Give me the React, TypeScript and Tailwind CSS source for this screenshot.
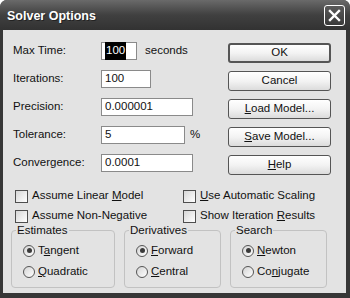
import React from "react";

const font = { fontFamily: '"Liberation Sans", Arial, sans-serif' };

function Field({ label, width, children, suffix }: { label: string; width: string; children: React.ReactNode; suffix?: string }) {
  return (
    <div className="flex items-center h-[18px]">
      <span className="w-[88px]">{label}</span>
      <div className={`${width} h-[18px] bg-white border border-[#8a8a8a] flex items-center pl-[3px]`}>
        {children}
      </div>
      {suffix && <span className={suffix === "%" ? "ml-[5px]" : "ml-[8px]"}>{suffix}</span>}
    </div>
  );
}

function Button({ children, isDefault }: { children: React.ReactNode; isDefault?: boolean }) {
  return (
    <div
      className={`h-[20px] w-[103px] rounded-[3px] flex items-center justify-center bg-gradient-to-b from-white via-[#f3f3f3] to-[#dcdcdc] ${
        isDefault ? "border-2 border-[#555]" : "border border-[#555]"
      }`}
    >
      {children}
    </div>
  );
}

function Checkbox({ children }: { children: React.ReactNode }) {
  return (
    <div className="flex items-center h-[20px] gap-[4px]">
      <span className="w-[13px] h-[13px] border border-[#4e4e4e] bg-gradient-to-br from-[#d6d6d6] to-white" />
      <span>{children}</span>
    </div>
  );
}

function Radio({ checked, children }: { checked?: boolean; children: React.ReactNode }) {
  return (
    <div className="flex items-center h-[21px] gap-[3px]">
      <span className="w-[12px] h-[12px] rounded-full border border-[#555] bg-gradient-to-br from-[#d4d4d4] to-white flex items-center justify-center">
        {checked && <span className="w-[5px] h-[5px] rounded-full bg-[#3a3a3a]" />}
      </span>
      <span>{children}</span>
    </div>
  );
}

function Group({ title, width, children }: { title: string; width: string; children: React.ReactNode }) {
  return (
    <fieldset className={`${width} border border-[#c2c2c2] rounded-[4px] pt-[3px] pb-[5px]`}>
      <legend className="ml-[4px] px-[1px] leading-[13px]">{title}</legend>
      <div className="pl-[11px]">{children}</div>
    </fieldset>
  );
}

export default function App() {
  return (
    <div className="w-[350px] h-[298px] bg-white">
      <div className="w-full h-full bg-[#373737] rounded-t-[7px] flex flex-col text-[11.5px] text-[#111]" style={font}>
        {/* Title bar */}
        <div className="h-[30px] shrink-0 rounded-t-[7px] bg-gradient-to-b from-[#6a6a6a] via-[#404040] to-[#323232] flex items-center justify-between pl-[7px] pr-[5px]">
          <span className="text-white font-bold text-[12.5px] pt-[3px] [text-shadow:1px_1px_0_#222]">Solver Options</span>
          <div className="w-[21px] h-[21px] rounded-[3px] border border-white bg-gradient-to-b from-[#5a5a5a] to-[#3a3a3a] flex items-center justify-center">
            <svg width="13" height="13" viewBox="0 0 13 13">
              <path d="M2 2L11 11M11 2L2 11" stroke="white" strokeWidth="2.4" strokeLinecap="square" />
            </svg>
          </div>
        </div>

        {/* Client area */}
        <div className="flex-1 ml-[3px] mr-[4px] mb-[5px] bg-[#e3e3e3] flex flex-col">
          <div className="flex pt-[12px] pl-[10px]">
            <div className="flex flex-col gap-[10px] w-[215px]">
              <Field label="Max Time:" width="w-[36px]" suffix="seconds">
                <span className="bg-black text-white px-[1px]">100</span>
              </Field>
              <Field label="Iterations:" width="w-[50px]">100</Field>
              <Field label="Precision:" width="w-[92px]">0.000001</Field>
              <Field label="Tolerance:" width="w-[84px]" suffix="%">5</Field>
              <Field label="Convergence:" width="w-[92px]">0.0001</Field>
            </div>
            <div className="flex flex-col gap-[8px] mt-[1px]">
              <Button isDefault>OK</Button>
              <Button>Cancel</Button>
              <Button>
                <span><u>L</u>oad Model...</span>
              </Button>
              <Button>
                <span><u>S</u>ave Model...</span>
              </Button>
              <Button>
                <span><u>H</u>elp</span>
              </Button>
            </div>
          </div>

          <div className="grid grid-cols-[168px_1fr] pl-[12px] mt-[11px]">
            <Checkbox>Assume Linear <u>M</u>odel</Checkbox>
            <Checkbox><u>U</u>se Automatic Scaling</Checkbox>
            <Checkbox>Assume Non-Negative</Checkbox>
            <Checkbox>Show Iteration <u>R</u>esults</Checkbox>
          </div>

          <div className="flex gap-[9px] pl-[8px] mt-[-2px]">
            <Group title="Estimates" width="w-[104px]">
              <Radio checked>T<u>a</u>ngent</Radio>
              <Radio><u>Q</u>uadratic</Radio>
            </Group>
            <Group title="Derivatives" width="w-[97px]">
              <Radio checked><u>F</u>orward</Radio>
              <Radio><u>C</u>entral</Radio>
            </Group>
            <Group title="Search" width="w-[97px]">
              <Radio checked><u>N</u>ewton</Radio>
              <Radio>Co<u>n</u>jugate</Radio>
            </Group>
          </div>
        </div>
      </div>
    </div>
  );
}
